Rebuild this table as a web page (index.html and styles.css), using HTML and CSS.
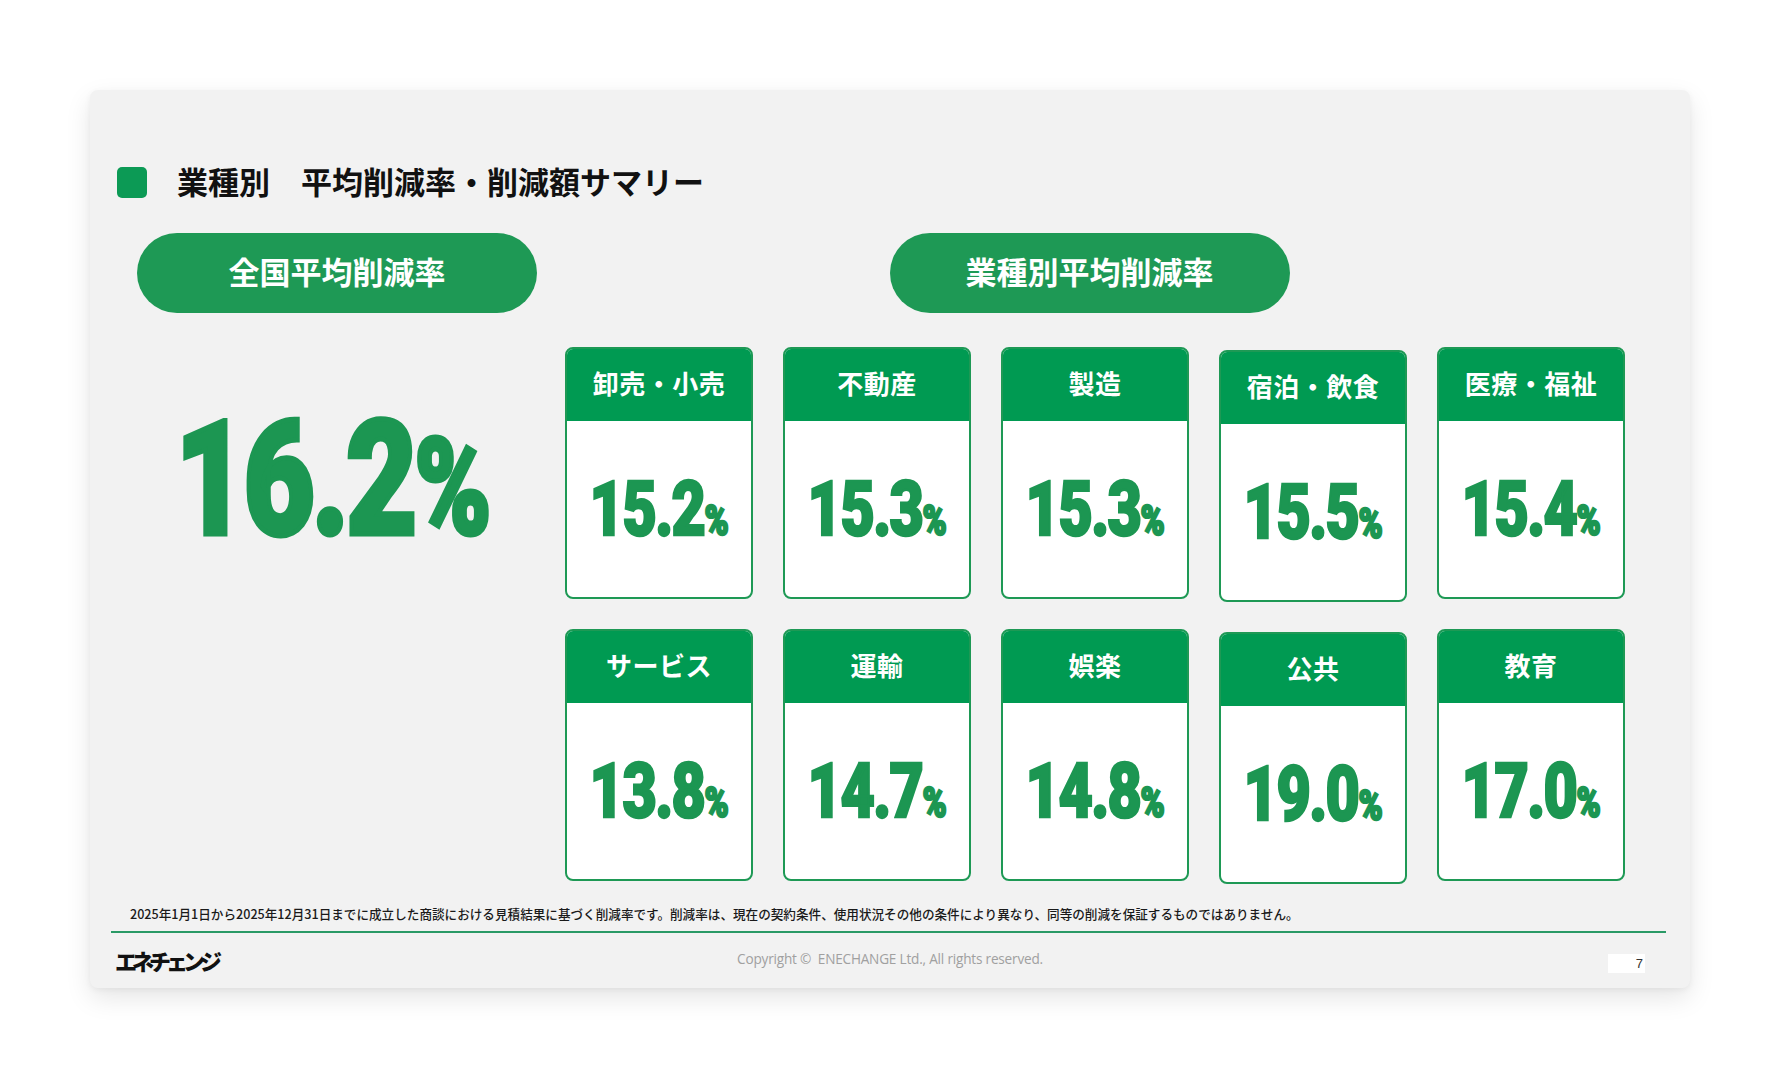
FILE: index.html
```html
<!DOCTYPE html>
<html lang="ja">
<head>
<meta charset="utf-8">
<title>業種別 平均削減率・削減額サマリー</title>
<link rel="stylesheet" href="styles.css">
</head>
<body>
<div class="slide">
  <header class="slide-title">
    <span class="title-mark"></span>
    <h1 class="title-text">業種別　平均削減率・削減額サマリー</h1>
  </header>
  <div class="main">
    <section class="national">
      <div class="pill">全国平均削減率</div>
      <div class="national-value"><span class="big-num">16.2<span class="big-pct">%</span></span></div>
    </section>
    <section class="industry">
      <div class="pill pill-industry">業種別平均削減率</div>
      <div class="card-grid">
        <div class="card"><div class="card-head">卸売・小売</div><div class="card-body"><span class="num">15.2<span class="pct">%</span></span></div></div>
        <div class="card"><div class="card-head">不動産</div><div class="card-body"><span class="num">15.3<span class="pct">%</span></span></div></div>
        <div class="card"><div class="card-head">製造</div><div class="card-body"><span class="num">15.3<span class="pct">%</span></span></div></div>
        <div class="card card-shift"><div class="card-head">宿泊・飲食</div><div class="card-body"><span class="num">15.5<span class="pct">%</span></span></div></div>
        <div class="card"><div class="card-head">医療・福祉</div><div class="card-body"><span class="num">15.4<span class="pct">%</span></span></div></div>
        <div class="card"><div class="card-head">サービス</div><div class="card-body"><span class="num">13.8<span class="pct">%</span></span></div></div>
        <div class="card"><div class="card-head">運輸</div><div class="card-body"><span class="num">14.7<span class="pct">%</span></span></div></div>
        <div class="card"><div class="card-head">娯楽</div><div class="card-body"><span class="num">14.8<span class="pct">%</span></span></div></div>
        <div class="card card-shift"><div class="card-head">公共</div><div class="card-body"><span class="num">19.0<span class="pct">%</span></span></div></div>
        <div class="card"><div class="card-head">教育</div><div class="card-body"><span class="num">17.0<span class="pct">%</span></span></div></div>
      </div>
    </section>
  </div>
  <p class="note">2025年1月1日から2025年12月31日までに成立した商談における見積結果に基づく削減率です。削減率は、現在の契約条件、使用状況その他の条件により異なり、同等の削減を保証するものではありません。</p>
  <div class="rule"></div>
  <footer class="footer">
    <div class="logo">エネチェンジ</div>
    <div class="copyright">Copyright ©&nbsp; ENECHANGE Ltd., All rights reserved.</div>
    <div class="page">7</div>
  </footer>
</div>
</body>
</html>
```

FILE: styles.css
```css
* { box-sizing: border-box; }
html, body { margin: 0; padding: 0; }
body {
  background: #ffffff;
  font-family: "Noto Sans CJK JP", "Noto Sans", sans-serif;
  width: 1780px;
  height: 1080px;
  overflow: hidden;
}
.slide {
  margin: 90px 0 0 90px;
  width: 1600px;
  height: 898px;
  background: #f2f2f2;
  border-radius: 8px;
  box-shadow: 0 10px 26px rgba(0, 0, 0, 0.10), 0 2px 6px rgba(0, 0, 0, 0.05);
  display: flex;
  flex-direction: column;
}
.slide-title {
  display: flex;
  align-items: center;
  gap: 30px;
  margin: 77px 0 0 27px;
  height: 31px;
}
.title-mark {
  flex: none;
  width: 30px;
  height: 31px;
  border-radius: 5px;
  background: #0c9a55;
}
.title-text {
  margin: 0 0 4px 0;
  font-size: 31px;
  line-height: 31px;
  font-weight: 700;
  color: #111111;
}
.main {
  display: flex;
  gap: 28px;
  margin: 35px 0 0 47px;
}
.national {
  width: 400px;
  display: flex;
  flex-direction: column;
}
.industry {
  width: 1060px;
  display: flex;
  flex-direction: column;
  align-items: center;
}
.pill {
  width: 400px;
  height: 80px;
  border-radius: 40px;
  background: #1e9955;
  color: #ffffff;
  font-size: 31px;
  font-weight: 700;
  padding-bottom: 6px;
  display: flex;
  align-items: center;
  justify-content: center;
}
.pill-industry { margin-right: 11px; }
.national-value {
  margin-top: 34px;
  height: 252px;
  padding-top: 14px;
  display: flex;
  align-items: center;
  justify-content: center;
}
.big-num {
  display: inline-block;
  font-family: Roboto, "Liberation Sans", sans-serif;
  font-weight: 900;
  font-size: 160px;
  line-height: 1;
  color: #1c9652;
  -webkit-text-stroke: 5px #1c9652;
  letter-spacing: -4px;
  transform: scaleX(0.77);
  margin-right: 8px;
  white-space: nowrap;
}
.big-pct { font-size: 0.84em; letter-spacing: 0; }
.card-grid {
  margin-top: 34px;
  display: grid;
  grid-template-columns: repeat(5, 188px);
  grid-auto-rows: 252px;
  gap: 30px;
  width: 1060px;
}
.card {
  border: 2px solid #1e9955;
  border-radius: 8px;
  background: #ffffff;
  overflow: hidden;
  display: flex;
  flex-direction: column;
}
.card-shift {
  margin-top: 3px;
  margin-bottom: -3px;
}
.card-head {
  flex: none;
  height: 72px;
  padding-bottom: 6px;
  background: #009a52;
  color: #ffffff;
  font-size: 26px;
  font-weight: 700;
  letter-spacing: 0.5px;
  display: flex;
  align-items: center;
  justify-content: center;
}
.card-body {
  flex: 1;
  display: flex;
  align-items: center;
  justify-content: center;
}
.num {
  display: inline-block;
  font-family: Roboto, "Liberation Sans", sans-serif;
  font-weight: 900;
  font-size: 76px;
  line-height: 1;
  color: #1c9652;
  -webkit-text-stroke: 2.5px #1c9652;
  letter-spacing: -2px;
  transform: scaleX(0.78);
  white-space: nowrap;
}
.pct { font-size: 0.55em; letter-spacing: 0; }
.note {
  margin: 24px 0 0 40px;
  font-size: 12.6px;
  line-height: 18px;
  font-weight: 500;
  color: #1a1a1a;
  white-space: nowrap;
}
.rule {
  margin: 8px 0 0 21px;
  width: 1555px;
  height: 2px;
  background: #2a9a66;
}
.footer {
  margin-top: 7px;
  height: 40px;
  padding: 0 25px;
  display: grid;
  grid-template-columns: 1fr auto 1fr;
  align-items: center;
}
.logo {
  font-size: 22px;
  font-weight: 900;
  color: #111111;
  letter-spacing: -5px;
  line-height: 1;
}
.copyright {
  font-family: "Open Sans", "Liberation Sans", sans-serif;
  font-size: 13.6px;
  color: #a0a0a0;
  letter-spacing: -0.2px;
  margin-bottom: 3px;
}
.page {
  justify-self: end;
  margin: 6px 20px 0 0;
  width: 37px;
  height: 19px;
  background: #ffffff;
  font-family: "Liberation Sans", sans-serif;
  font-size: 13px;
  line-height: 19px;
  color: #333333;
  text-align: right;
  padding-right: 2px;
}
```
